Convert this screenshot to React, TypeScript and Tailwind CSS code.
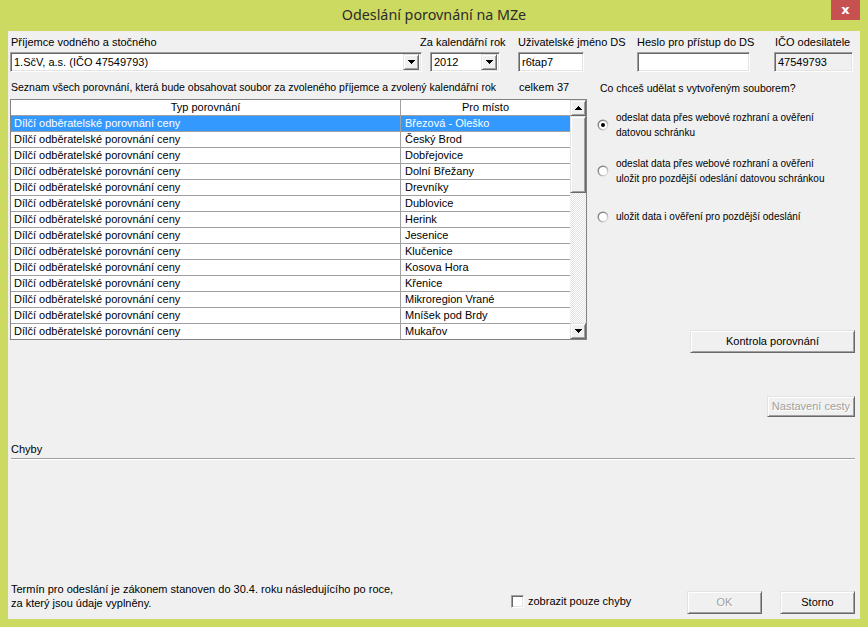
const rows = [
  "Březová - Oleško",
  "Český Brod",
  "Dobřejovice",
  "Dolní Břežany",
  "Drevníky",
  "Dublovice",
  "Herink",
  "Jesenice",
  "Klučenice",
  "Kosova Hora",
  "Křenice",
  "Mikroregion Vrané",
  "Mníšek pod Brdy",
  "Mukařov",
];

// classic 3D borders
const raised =
  "border border-t-[#e3e3e3] border-l-[#e3e3e3] border-r-[#696969] border-b-[#696969] shadow-[inset_1px_1px_0_#ffffff,inset_-1px_-1px_0_#a0a0a0] bg-[#f0f0f0]";
const sunken =
  "border border-t-[#a0a0a0] border-l-[#a0a0a0] border-r-white border-b-white shadow-[inset_1px_1px_0_#696969,inset_-1px_-1px_0_#e3e3e3]";

function Arrow({ up }: { up?: boolean }) {
  return (
    <svg width="7" height="4" viewBox="0 0 7 4" shapeRendering="crispEdges" className={up ? "rotate-180" : ""}>
      <rect x="0" y="0" width="7" height="1" fill="#000" />
      <rect x="1" y="1" width="5" height="1" fill="#000" />
      <rect x="2" y="2" width="3" height="1" fill="#000" />
      <rect x="3" y="3" width="1" height="1" fill="#000" />
    </svg>
  );
}

function Combo({ value, width }: { value: string; width: string }) {
  return (
    <div className={`${width} h-[20px] bg-white ${sunken} flex items-center pl-[3px] pr-[2px]`}>
      <span className="flex-1 whitespace-nowrap">{value}</span>
      <div className={`w-[16px] h-[16px] ${raised} flex items-center justify-center`}>
        <Arrow />
      </div>
    </div>
  );
}

function Radio({ checked }: { checked?: boolean }) {
  return (
    <svg width="12" height="12" viewBox="0 0 12 12" className="shrink-0">
      <defs>
        <linearGradient id={checked ? "rg1" : "rg0"} x1="0" y1="0" x2="1" y2="1">
          <stop offset="0" stopColor="#6b6b6b" />
          <stop offset="0.5" stopColor="#a0a0a0" />
          <stop offset="1" stopColor="#ffffff" />
        </linearGradient>
      </defs>
      <circle cx="6" cy="6" r="5.5" fill={`url(#${checked ? "rg1" : "rg0"})`} />
      <circle cx="6" cy="6" r="4" fill="#ffffff" />
      {checked && <circle cx="6" cy="6" r="2" fill="#000000" />}
    </svg>
  );
}

function Button({ label, width, height, disabled }: { label: string; width: string; height: string; disabled?: boolean }) {
  return (
    <div
      className={`${width} ${height} ${raised} flex items-center justify-center ${
        disabled ? "text-[#a0a0a0] [text-shadow:1px_1px_0_#ffffff]" : "text-black"
      }`}
    >
      {label}
    </div>
  );
}

export default function App() {
  return (
    <div className="w-[868px] h-[627px] bg-[#cdda61] flex flex-col font-['Liberation_Sans',Arial,sans-serif] text-[11px] text-black overflow-hidden">
      {/* title bar */}
      <div className="h-[31px] shrink-0 relative flex items-center justify-center">
        <span className="font-['Noto_Sans',sans-serif] text-[14.3px] text-[#2b2b2b] pb-[1px]">Odeslání porovnání na MZe</span>
        <div className="absolute right-[8px] top-0 w-[29px] h-[20px] bg-[#c75050] flex items-center justify-center text-white text-[13px] font-bold font-['DejaVu_Sans',sans-serif] leading-none pb-[2px]">
          x
        </div>
      </div>

      {/* client area */}
      <div className="mx-[8px] mb-[8px] flex-1 bg-[#f0f0f0] flex flex-col">
        {/* top fields */}
        <div className="flex pt-[5px] leading-[13px]">
          <div className="ml-[2px] w-[410px] shrink-0 flex flex-col">
            <span className="h-[13px] pl-[1px]">Příjemce vodného a stočného</span>
            <div className="mt-[3px]">
              <Combo value="1.SčV, a.s. (IČO 47549793)" width="w-[412px]" />
            </div>
          </div>
          <div className="w-[98px] shrink-0 flex flex-col">
            <span className="h-[13px] whitespace-nowrap">Za kalendářní rok</span>
            <div className="mt-[3px] ml-[10px]">
              <Combo value="2012" width="w-[70px]" />
            </div>
          </div>
          <div className="w-[119px] shrink-0 flex flex-col">
            <span className="h-[13px] whitespace-nowrap">Uživatelské jméno DS</span>
            <div className={`mt-[3px] w-[66px] h-[20px] bg-white ${sunken} flex items-center pl-[3px]`}>r6tap7</div>
          </div>
          <div className="w-[137px] shrink-0 flex flex-col">
            <span className="h-[13px] whitespace-nowrap">Heslo pro přístup do DS</span>
            <div className={`mt-[3px] w-[113px] h-[20px] bg-white ${sunken}`} />
          </div>
          <div className="flex flex-col">
            <span className="h-[13px] pl-[1px] whitespace-nowrap">IČO odesilatele</span>
            <div className={`mt-[3px] w-[79px] h-[20px] bg-[#f0f0f0] ${sunken} flex items-center pl-[3px]`}>47549793</div>
          </div>
        </div>

        {/* middle */}
        <div className="flex mt-[9px]">
          <div className="ml-[2px] w-[577px] shrink-0 flex flex-col">
            <div className="flex h-[13px] leading-[13px] whitespace-nowrap">
              <span className="w-[509px] pl-[1px] text-[10.5px]">
                Seznam všech porovnání, která bude obsahovat soubor za zvoleného příjemce a zvolený kalendářní rok
              </span>
              <span>celkem 37</span>
            </div>
            <div className="mt-[5px] h-[241px] border border-[#828282] bg-white flex overflow-hidden">
              <div className="w-[559px] flex flex-col">
                <div className="flex h-[16px] shrink-0 border-b border-[#a0a0a0] leading-[15px]">
                  <div className="w-[390px] border-r border-[#a0a0a0] text-center">Typ porovnání</div>
                  <div className="flex-1 text-center">Pro místo</div>
                </div>
                {rows.map((place, i) => (
                  <div
                    key={place}
                    className={`flex h-[16px] shrink-0 border-b border-[#a0a0a0] leading-[15px] whitespace-nowrap ${
                      i === 0 ? "bg-[#3399ff] text-white" : ""
                    }`}
                  >
                    <div className="w-[390px] border-r border-[#a0a0a0] pl-[3px]">Dílčí odběratelské porovnání ceny</div>
                    <div className="flex-1 pl-[4px]">{place}</div>
                  </div>
                ))}
              </div>
              <div className="w-[16px] flex flex-col">
                <div className={`h-[16px] shrink-0 ${raised} flex items-center justify-center`}>
                  <Arrow up />
                </div>
                <div className={`h-[77px] shrink-0 ${raised}`} />
                <div className="flex-1 bg-[image:repeating-conic-gradient(#ffffff_0%_25%,#e2e2e2_0%_50%)] bg-[length:2px_2px]" />
                <div className={`h-[16px] shrink-0 ${raised} flex items-center justify-center`}>
                  <Arrow />
                </div>
              </div>
            </div>
          </div>

          <div className="ml-[13px] flex-1 flex flex-col leading-[15px] text-[10px]">
            <span className="pt-[1px] leading-[13px] text-[10.5px]">Co chceš udělat s vytvořeným souborem?</span>
            <div className="mt-[15px] -ml-[3px] flex items-center gap-[7px]">
              <Radio checked />
              <span>
                odeslat data přes webové rozhraní a ověření
                <br />
                datovou schránku
              </span>
            </div>
            <div className="mt-[16px] -ml-[3px] flex items-center gap-[7px]">
              <Radio />
              <span>
                odeslat data přes webové rozhraní a ověření
                <br />
                uložit pro pozdější odeslání datovou schránkou
              </span>
            </div>
            <div className="mt-[23px] -ml-[3px] flex items-center gap-[7px]">
              <Radio />
              <span>uložit data i ověření pro pozdější odeslání</span>
            </div>
            <div className="mt-[106px] self-end mr-[5px] text-[11px]">
              <Button label="Kontrola porovnání" width="w-[165px]" height="h-[23px]" />
            </div>
            <div className="mt-[43px] self-end mr-[5px] text-[11px]">
              <Button label="Nastavení cesty" width="w-[88px]" height="h-[21px]" disabled />
            </div>
          </div>
        </div>

        {/* errors */}
        <span className="mt-[26px] ml-[3px] leading-[13px]">Chyby</span>
        <div className="mt-[2px] ml-[3px] mr-[5px] border-t border-t-[#a0a0a0] border-b border-b-white" />

        {/* bottom */}
        <div className="mt-auto mb-[5px] h-[32px] flex items-start">
          <div className="w-[500px] ml-[3px] leading-[14px]">
            Termín pro odeslání je zákonem stanoven do 30.4. roku následujícího po roce,
            <br />
            za který jsou údaje vyplněny.
          </div>
          <div className="mt-[11px] flex items-center gap-[4px]">
            <div className={`w-[13px] h-[13px] bg-white ${sunken}`} />
            <span>zobrazit pouze chyby</span>
          </div>
          <div className="ml-auto mt-[9px] mr-[5px] flex gap-[18px]">
            <Button label="OK" width="w-[75px]" height="h-[23px]" disabled />
            <Button label="Storno" width="w-[75px]" height="h-[23px]" />
          </div>
        </div>
      </div>
    </div>
  );
}
